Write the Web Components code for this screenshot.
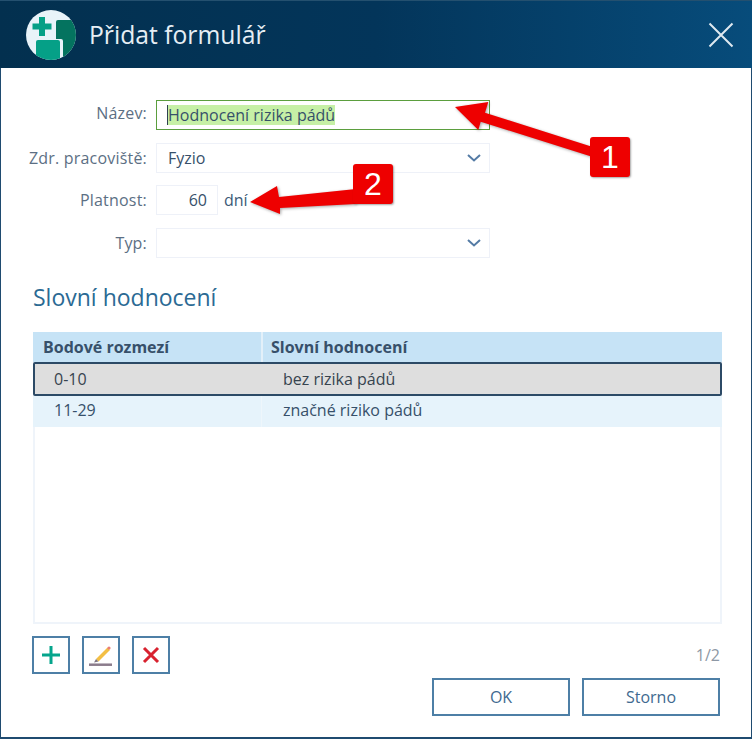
<!DOCTYPE html>
<html lang="cs">
<head>
<meta charset="utf-8">
<title>Přidat formulář</title>
<style>
html, body { margin: 0; padding: 0; background: #fff; }
body { font-family: "Open Sans", "Liberation Sans", sans-serif; color: #3d5a78; }
</style>
</head>
<body>
<app-dialog>
  <dialog-header slot="header">Přidat formulář</dialog-header>

  <form-row raised label="Název:"><text-box selected>Hodnocení rizika pádů</text-box></form-row>
  <form-row label="Zdr. pracoviště:"><select-box>Fyzio</select-box></form-row>
  <form-row label="Platnost:"><number-box>60</number-box><span style="font-size:16px;margin-left:6px;padding-bottom:1px">dní</span></form-row>
  <form-row label="Typ:"><select-box></select-box></form-row>

  <rating-table slot="table">
    <rating-row head first="Bodové rozmezí" second="Slovní hodnocení"></rating-row>
    <rating-row active first="0-10" second="bez rizika pádů"></rating-row>
    <rating-row first="11-29" second="značné riziko pádů"></rating-row>
  </rating-table>

  <icon-button slot="tools" kind="add"></icon-button>
  <icon-button slot="tools" kind="edit"></icon-button>
  <icon-button slot="tools" kind="delete"></icon-button>

  <action-button slot="actions">OK</action-button>
  <action-button slot="actions">Storno</action-button>
</app-dialog>
<callout-arrows></callout-arrows>

<script>
class AppDialog extends HTMLElement {
  constructor() {
    super();
    this.attachShadow({mode: 'open'}).innerHTML = `
<style>
:host { display: flex; flex-direction: column; box-sizing: border-box; width: 752px; height: 739px;
  border: solid #1f4b70; border-width: 0 1px 2px 1px; }
.form { display: flex; flex-direction: column; gap: 12.67px; padding: 32px 0 0 0; }
h2 { margin: 22px 0 0 32px; height: 34px; font: 400 23px/34px "Open Sans", sans-serif; color: #2b6a94; }
.table { margin: 18px 29px 0 32px; }
.footer { display: flex; justify-content: space-between; margin: 12px 31px 0 31px; }
.tools { display: flex; gap: 12px; }
.page { font-size: 16px; color: #8d98a5; line-height: 18px; margin-top: 10px; }
.actions { display: flex; justify-content: flex-end; gap: 12px; margin: 4px 31px 0 0; }
</style>
<slot name="header"></slot>
<div class="form"><slot></slot></div>
<h2>Slovní hodnocení</h2>
<div class="table"><slot name="table"></slot></div>
<div class="footer">
  <div class="tools"><slot name="tools"></slot></div>
  <div class="page">1/2</div>
</div>
<div class="actions"><slot name="actions"></slot></div>`;
  }
}

class DialogHeader extends HTMLElement {
  constructor() {
    super();
    this.attachShadow({mode: 'open'}).innerHTML = `
<style>
:host { display: flex; align-items: center; height: 68px; margin: 0 -1px; padding-left: 26px;
  background: linear-gradient(90deg, #03304f 0%, #03355a 50%, #074c7b 100%); color: #e6eef4;
  border-top: 1px solid #24506f; box-sizing: border-box; }
.logo { width: 50px; height: 50px; flex: none; }
.title { font-size: 24.7px; line-height: 32px; margin-left: 13px; flex: 1; }
.close { width: 26px; height: 26px; margin-right: 18px; }
</style>
<svg class="logo" viewBox="0 0 50 50">
  <clipPath id="c"><circle cx="25" cy="25" r="25"/></clipPath>
  <circle cx="25" cy="25" r="25" fill="#e8f3f9"/>
  <g clip-path="url(#c)">
    <path d="M30 12a2 2 0 0 1 2-2h18v40H37V31a2 2 0 0 0-2-2h-5z" fill="#04735f"/>
    <path d="M10 32a2 2 0 0 1 2-2h20a2 2 0 0 1 2 2v18H10z" fill="#05a087"/>
    <path d="M13 7h6v6.500h6.500v6H19V26h-6v-6.500H6.500v-6H13z" fill="#05a087"/>
  </g>
</svg>
<div class="title"><slot></slot></div>
<svg class="close" viewBox="0 0 26 26"><path d="M1.500 1.500l23 23M24.500 1.500l-23 23" stroke="#dfe9f0" stroke-width="2" fill="none"/></svg>`;
  }
}

class FormRow extends HTMLElement {
  constructor() {
    super();
    this.attachShadow({mode: 'open'}).innerHTML = `
<style>
:host { display: flex; align-items: center; height: 30px; }
label { width: 146px; text-align: right; font-size: 16px; letter-spacing: .2px; color: #5c6f84; margin-right: 9px; flex: none; }
:host([raised]) label { padding-bottom: 4px; }
</style>
<label></label><slot></slot>`;
    this.shadowRoot.querySelector('label').textContent = this.getAttribute('label');
  }
}

class TextBox extends HTMLElement {
  constructor() {
    super();
    this.attachShadow({mode: 'open'}).innerHTML = `
<style>
:host { display: flex; align-items: center; box-sizing: border-box; width: 334px; height: 30px;
  border: 1.500px solid #5b9e3e; padding-left: 10px; font-size: 16px; color: #37506a; }
.sel { background: #c6f0a6; line-height: 20px; border-left: 1.500px solid #2f4050; }
</style>
<span class="sel"><slot></slot></span>`;
  }
}

class SelectBox extends HTMLElement {
  constructor() {
    super();
    this.attachShadow({mode: 'open'}).innerHTML = `
<style>
:host { display: flex; align-items: center; justify-content: space-between; box-sizing: border-box;
  width: 334px; height: 30px; border: 1.500px solid #eef1f8; padding: 0 8px 0 11px; font-size: 16px; color: #37506a; }
svg { width: 14px; height: 8px; }
</style>
<span><slot></slot></span>
<svg viewBox="0 0 14 8"><path d="M1 1l6 5.500L13 1" fill="none" stroke="#547ba5" stroke-width="2"/></svg>`;
  }
}

class NumberBox extends HTMLElement {
  constructor() {
    super();
    this.attachShadow({mode: 'open'}).innerHTML = `
<style>
:host { display: block; box-sizing: border-box; width: 62px; height: 30px; border: 1.500px solid #eef1f8;
  text-align: right; padding-right: 10px; font-size: 16px; line-height: 28px; color: #37506a; }
</style>
<slot></slot>`;
  }
}

class RatingTable extends HTMLElement {
  constructor() {
    super();
    this.attachShadow({mode: 'open'}).innerHTML = `
<style>
:host { display: block; box-sizing: border-box; width: 689px; height: 292px; border: 2px solid #eff4fa; border-top: 0; }
.rows { margin: 0 -2px; }
</style>
<div class="rows"><slot></slot></div>`;
  }
}

class RatingRow extends HTMLElement {
  constructor() {
    super();
    this.attachShadow({mode: 'open'}).innerHTML = `
<style>
:host { display: grid; grid-template-columns: 228px 1fr; height: 31px; box-sizing: border-box;
  background: #e6f3fb; font-size: 16px; color: #37506a; }
.cell { display: flex; align-items: center; padding-left: 21px; padding-bottom: 2px; }
.cell + .cell { border-left: 1px solid #eef6fb; }
:host([head]) { background: #c6e3f6; height: 30px; font-weight: 700; }
:host([head]) .cell { padding-left: 10px; padding-bottom: 0; }
:host([head]) .cell + .cell { border-left: 2px solid #e3f0f9; padding-left: 8px; }
:host([active]) { background: #dedede; height: 34px; border: 2px solid #2c4a66; border-radius: 2px; color: #37444f; }
:host([active]) .cell { padding-left: 19px; padding-bottom: 0; }
:host([active]) .cell + .cell { border-left: 0; padding-left: 20px; }
</style>
<div class="cell"></div><div class="cell"></div>`;
    const cells = this.shadowRoot.querySelectorAll('.cell');
    cells[0].textContent = this.getAttribute('first');
    cells[1].textContent = this.getAttribute('second');
  }
}

const ICONS = {
  add: '<path d="M15 6v18M6 15h18" stroke="#05a58c" stroke-width="3" fill="none"/>',
  edit: '<path d="M3 24.700h23" stroke="#8b7c8c" stroke-width="2.500" fill="none"/>' +
        '<path d="M10 19L21.500 7.500l2.500 2.500L12.500 21.500z" fill="#f3bf45"/>' +
        '<path d="M10 19l2.500 2.500-4.500 1z" fill="#7e7480"/>' +
        '<circle cx="23" cy="8" r="1.600" fill="#ea7d78"/>',
  delete: '<path d="M8 8l14 14M22 8L8 22" stroke="#d8222f" stroke-width="3" fill="none"/>'
};

class IconButton extends HTMLElement {
  constructor() {
    super();
    this.attachShadow({mode: 'open'}).innerHTML = `
<style>
:host { display: flex; align-items: center; justify-content: center; box-sizing: border-box;
  width: 38px; height: 38px; border: 2px solid #4d7fa6; background: #fff; }
svg { width: 30px; height: 30px; }
</style>
<svg viewBox="0 0 30 30">${ICONS[this.getAttribute('kind')]}</svg>`;
  }
}

class ActionButton extends HTMLElement {
  constructor() {
    super();
    this.attachShadow({mode: 'open'}).innerHTML = `
<style>
:host { display: flex; align-items: center; justify-content: center; box-sizing: border-box;
  width: 138px; height: 38px; border: 2px solid #4d7fa6; font-size: 16px; color: #3f6a90; background: #fff; }
</style>
<slot></slot>`;
  }
}

class CalloutArrows extends HTMLElement {
  constructor() {
    super();
    this.attachShadow({mode: 'open'}).innerHTML = `
<style>
:host { display: block; position: absolute; left: 0; top: 0; width: 752px; height: 739px; pointer-events: none; }
svg { position: absolute; left: 0; top: 0; filter: drop-shadow(1px 1px 1.500px rgba(0,0,0,.35)); }
.badge { position: absolute; width: 40px; height: 40px; background: #ee0000; border-radius: 3px;
  color: #fff; font: 400 32px/40px "Liberation Sans", sans-serif; text-align: center;
  box-shadow: 1px 1px 2px rgba(0,0,0,.35); }
</style>
<svg width="752" height="739" viewBox="0 0 752 739">
  <path d="M455 107L488.300 102L485 112.700L592 146.700L592 156.700L480.700 121.700L478.300 130z" fill="#ee0000"/>
  <path d="M250 202L277 186L279 197L356 189L356 204L280 208L280 214z" fill="#ee0000"/>
</svg>
<div class="badge" style="left:590px;top:137px">1</div>
<div class="badge" style="left:353px;top:164px">2</div>`;
  }
}

window.customElements.define('app-dialog', AppDialog);
window.customElements.define('dialog-header', DialogHeader);
window.customElements.define('form-row', FormRow);
window.customElements.define('text-box', TextBox);
window.customElements.define('select-box', SelectBox);
window.customElements.define('number-box', NumberBox);
window.customElements.define('rating-table', RatingTable);
window.customElements.define('rating-row', RatingRow);
window.customElements.define('icon-button', IconButton);
window.customElements.define('action-button', ActionButton);
window.customElements.define('callout-arrows', CalloutArrows);
</script>
</body>
</html>
